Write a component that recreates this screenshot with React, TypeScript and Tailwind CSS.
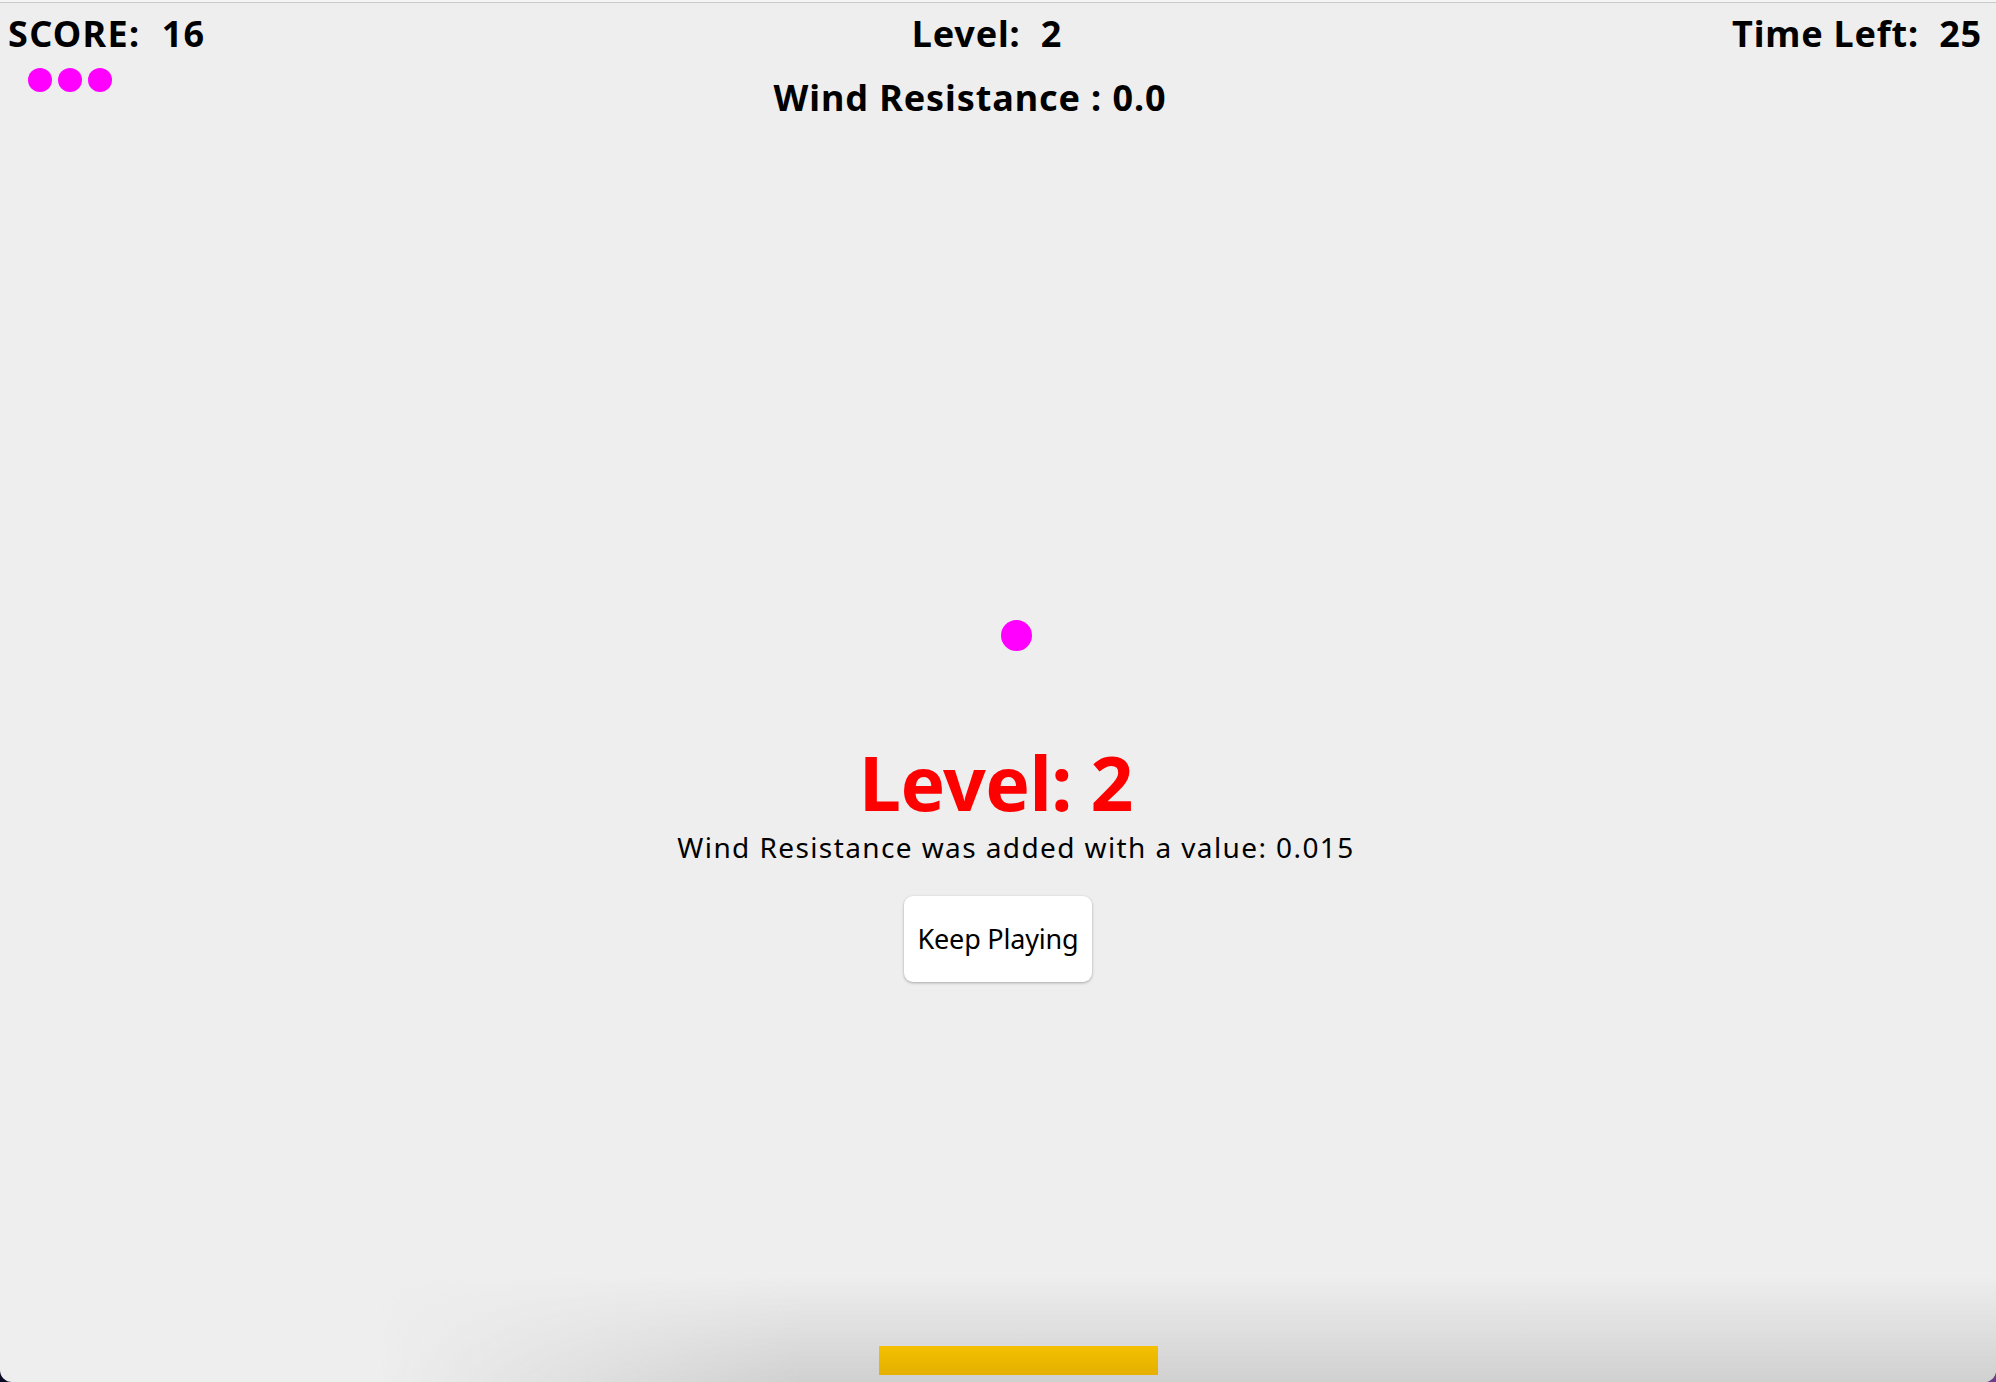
export default function App() {
  return (
    <div className="h-[1382px] w-full bg-gradient-to-r from-[#0b0a24] to-[#6a3f8a]">
      <div className="relative h-full w-full overflow-hidden rounded-b-[12px] bg-[#eeeeee] font-['Noto_Sans','Open_Sans',sans-serif] text-black">
        <div className="h-[2px] bg-[#f4f4f4]" />
        <div className="h-px bg-[#c9c9c9]" />

        {/* hud */}
        <div className="grid grid-cols-[1fr_auto_1fr] px-[8px] pt-[9px]">
          <div className="flex flex-col items-start">
            <div className="text-[36px] font-bold leading-[44px] tracking-[1.3px] whitespace-pre">SCORE:  16</div>
            <div className="mt-[12px] flex gap-[6px] pl-[20px]">
              <span className="h-[24px] w-[24px] rounded-full bg-[#ff00ff]" />
              <span className="h-[24px] w-[24px] rounded-full bg-[#ff00ff]" />
              <span className="h-[24px] w-[24px] rounded-full bg-[#ff00ff]" />
            </div>
          </div>
          <div className="flex flex-col items-center">
            <div className="mr-[22px] text-[36px] font-bold leading-[44px] tracking-[0.8px] whitespace-pre">Level:  2</div>
            <div className="mr-[56px] mt-[20px] text-[36px] font-bold leading-[44px] tracking-[0.9px]">Wind Resistance : 0.0</div>
          </div>
          <div className="flex justify-end pr-[6px]">
            <div className="text-[36px] font-bold leading-[44px] tracking-[0.8px] whitespace-pre">Time Left:  25</div>
          </div>
        </div>

        {/* ball */}
        <div className="absolute left-[1001px] top-[620px] h-[31px] w-[31px] rounded-full bg-[#ff00ff]" />

        {/* level up dialog */}
        <div className="absolute inset-x-0 top-[742px] flex flex-col items-center">
          <div className="mr-[4px] text-[75px] font-bold leading-[80px] tracking-[-0.6px] text-[#ff0000]">Level: 2</div>
          <div className="ml-[36px] mt-[7px] text-[28px] leading-[36px] tracking-[1.4px]">
            Wind Resistance was added with a value: 0.015
          </div>
          <button className="mt-[31px] flex h-[86px] w-[188px] items-center justify-center rounded-[9px] bg-white text-[27px] tracking-[-0.2px] shadow-[0_1px_3px_rgba(0,0,0,0.3)]">
            Keep Playing
          </button>
        </div>

        {/* bottom shade */}
        <div className="absolute inset-x-0 bottom-0 h-[105px] bg-gradient-to-b from-transparent to-[#d0d0d0] [mask-image:linear-gradient(to_right,transparent_380px,black_800px)]" />

        {/* paddle */}
        <div className="absolute left-[879px] top-[1346px] h-[29px] w-[279px] bg-gradient-to-b from-[#f4c000] to-[#e5b000]" />
      </div>
    </div>
  );
}
